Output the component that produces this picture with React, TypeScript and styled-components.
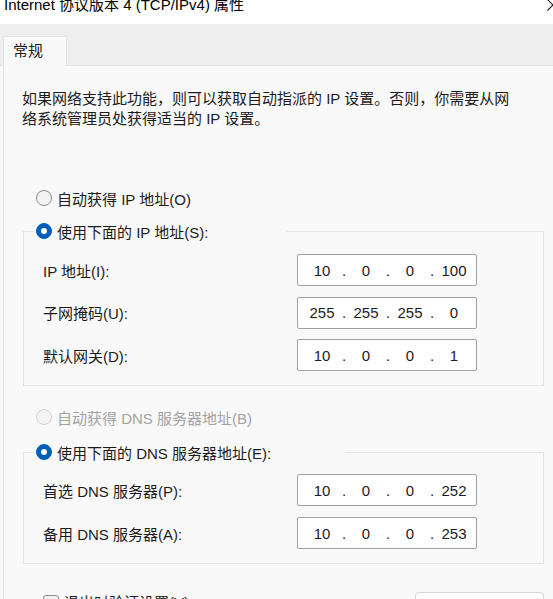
import { Fragment } from 'react';
import styled, { createGlobalStyle } from 'styled-components';

const GlobalStyle = createGlobalStyle`
  html, body {
    margin: 0;
    padding: 0;
    height: 599px;
    overflow: hidden;
    background: #f9f9f9;
  }
  body {
    font-family: "Liberation Sans", "Noto Sans CJK SC", sans-serif;
    font-size: 15px;
    color: #1b1b1b;
  }
`;

const TitleBar = styled.div`
  height: 24px;
  background: #fff;
  display: flex;
  align-items: flex-start;
  overflow: hidden;
  padding-left: 4px;
`;

const Title = styled.span`
  line-height: 20px;
  margin-top: -5px;
  color: #000;
  white-space: nowrap;
`;

const CloseIcon = styled.svg`
  margin-left: auto;
  margin-right: -6px;
  margin-top: -1px;
  flex: none;
`;

const TabStrip = styled.div`
  box-sizing: border-box;
  height: 42px;
  background: #eeeeee;
  border-bottom: 1px solid #e3e3e3;
  display: flex;
  align-items: flex-end;
  padding-left: 3px;
`;

const Tab = styled.div`
  box-sizing: border-box;
  width: 64px;
  height: 30px;
  margin-bottom: -1px;
  background: #f9f9f9;
  border: 1px solid #e3e3e3;
  border-bottom: none;
  padding-left: 9px;
  line-height: 28px;
  color: #1b1b1b;
`;

const Panel = styled.div`
  margin-left: 3px;
  border-left: 1px solid #e3e3e3;
  padding: 23px 9px 0 18px;
  min-height: 600px;
`;

const Description = styled.p`
  margin: 0;
  line-height: 20px;
  white-space: nowrap;
`;

const RadioRow = styled.label<{ $disabled?: boolean; $top?: number }>`
  display: flex;
  align-items: center;
  gap: 5px;
  height: 24px;
  margin-left: 14px;
  margin-top: ${(p) => p.$top ?? 0}px;
  color: ${(p) => (p.$disabled ? '#a3a3a3' : '#1b1b1b')};
  white-space: nowrap;
`;

const RadioCircle = styled.span<{ $checked?: boolean; $disabled?: boolean }>`
  box-sizing: border-box;
  width: 16px;
  height: 16px;
  border-radius: 50%;
  flex: none;
  position: relative;
  background: ${(p) => (p.$checked ? '#005fb8' : '#f3f3f3')};
  border: 1px solid
    ${(p) => (p.$checked ? '#005fb8' : p.$disabled ? '#cfcfcf' : '#8a8a8a')};

  &::after {
    content: '';
    display: ${(p) => (p.$checked ? 'block' : 'none')};
    position: absolute;
    left: 50%;
    top: 50%;
    width: 6px;
    height: 6px;
    border-radius: 50%;
    background: #fff;
    transform: translate(-50%, -50%);
  }
`;

const Group = styled.fieldset<{ $top: number }>`
  margin: ${(p) => p.$top}px 0 0 1px;
  padding: 0;
  border: 1px solid #e3e3e3;
  min-width: 0;
`;

const Legend = styled.legend<{ $width: number }>`
  padding: 0 0 0 2px;
  margin-left: 10px;
  width: ${(p) => p.$width}px;
  box-sizing: border-box;
`;

const LegendRow = styled(RadioRow)`
  margin-left: 0;
`;

const Fields = styled.div<{ $gap: number; $top: number }>`
  display: grid;
  grid-template-columns: 254px 180px;
  row-gap: ${(p) => p.$gap}px;
  align-items: center;
  padding: ${(p) => p.$top}px 0 14px 19px;
`;

const FieldLabel = styled.span`
  white-space: nowrap;
`;

const IpBox = styled.div`
  box-sizing: border-box;
  height: 32px;
  background: #fff;
  border: 1px solid #a0a0a0;
  border-radius: 2px;
  display: flex;
  align-items: center;
  padding-left: 7px;
  font-size: 15px;
  color: #1b1b1b;
`;

const Octet = styled.span`
  width: 34px;
  text-align: center;
`;

const Dot = styled.span`
  width: 10px;
  text-align: center;
`;

const BottomRow = styled.div`
  display: flex;
  align-items: flex-start;
  margin-top: 28px;
  padding-left: 21px;
`;

const CheckRow = styled.label`
  display: flex;
  align-items: center;
  gap: 5px;
  margin-top: 3px;
  line-height: 16px;
  white-space: nowrap;
`;

const CheckBox = styled.span`
  box-sizing: border-box;
  width: 16px;
  height: 16px;
  border: 1px solid #8a8a8a;
  border-radius: 3px;
  background: #f3f3f3;
  flex: none;
`;

const Button = styled.button`
  margin-left: auto;
  box-sizing: border-box;
  width: 129px;
  height: 32px;
  background: #fdfdfd;
  border: 1px solid #d5d5d5;
  border-radius: 4px;
  font: inherit;
  color: #1b1b1b;
`;

function IpField({ value }: { value: string }) {
  const parts = value.split('.');
  return (
    <IpBox>
      {parts.map((part, i) => (
        <Fragment key={i}>
          <Octet>{part}</Octet>
          {i < parts.length - 1 && <Dot>.</Dot>}
        </Fragment>
      ))}
    </IpBox>
  );
}

function Radio({ label, checked, disabled, top }: { label: string; checked?: boolean; disabled?: boolean; top?: number }) {
  return (
    <RadioRow $disabled={disabled} $top={top}>
      <RadioCircle $checked={checked} $disabled={disabled} />
      {label}
    </RadioRow>
  );
}

const ipRows = [
  { label: 'IP 地址(I):', value: '10.0.0.100' },
  { label: '子网掩码(U):', value: '255.255.255.0' },
  { label: '默认网关(D):', value: '10.0.0.1' },
];

const dnsRows = [
  { label: '首选 DNS 服务器(P):', value: '10.0.0.252' },
  { label: '备用 DNS 服务器(A):', value: '10.0.0.253' },
];

export default function App() {
  return (
    <>
      <GlobalStyle />
      <TitleBar>
        <Title>Internet 协议版本 4 (TCP/IPv4) 属性</Title>
        <CloseIcon width="12" height="12" viewBox="0 0 12 12">
          <path d="M0.5 0.5 L11.5 11.5 M0.5 11.5 L11.5 0.5" stroke="#1b1b1b" strokeWidth="1.1" fill="none" />
        </CloseIcon>
      </TitleBar>
      <TabStrip>
        <Tab>常规</Tab>
      </TabStrip>
      <Panel>
        <Description>
          如果网络支持此功能，则可以获取自动指派的 IP 设置。否则，你需要从网
          <br />
          络系统管理员处获得适当的 IP 设置。
        </Description>

        <Radio label="自动获得 IP 地址(O)" top={57} />
        <Group $top={9}>
          <Legend $width={253}>
            <LegendRow>
              <RadioCircle $checked />
              使用下面的 IP 地址(S):
            </LegendRow>
          </Legend>
          <Fields $gap={10.5} $top={11}>
            {ipRows.map((row) => (
              <Fragment key={row.label}>
                <FieldLabel>{row.label}</FieldLabel>
                <IpField value={row.value} />
              </Fragment>
            ))}
          </Fields>
        </Group>

        <Radio label="自动获得 DNS 服务器地址(B)" disabled top={19} />
        <Group $top={11}>
          <Legend $width={311}>
            <LegendRow>
              <RadioCircle $checked />
              使用下面的 DNS 服务器地址(E):
            </LegendRow>
          </Legend>
          <Fields $gap={11} $top={10}>
            {dnsRows.map((row) => (
              <Fragment key={row.label}>
                <FieldLabel>{row.label}</FieldLabel>
                <IpField value={row.value} />
              </Fragment>
            ))}
          </Fields>
        </Group>

        <BottomRow>
          <CheckRow>
            <CheckBox />
            退出时验证设置(V)
          </CheckRow>
          <Button>高级(V)...</Button>
        </BottomRow>
      </Panel>
    </>
  );
}
